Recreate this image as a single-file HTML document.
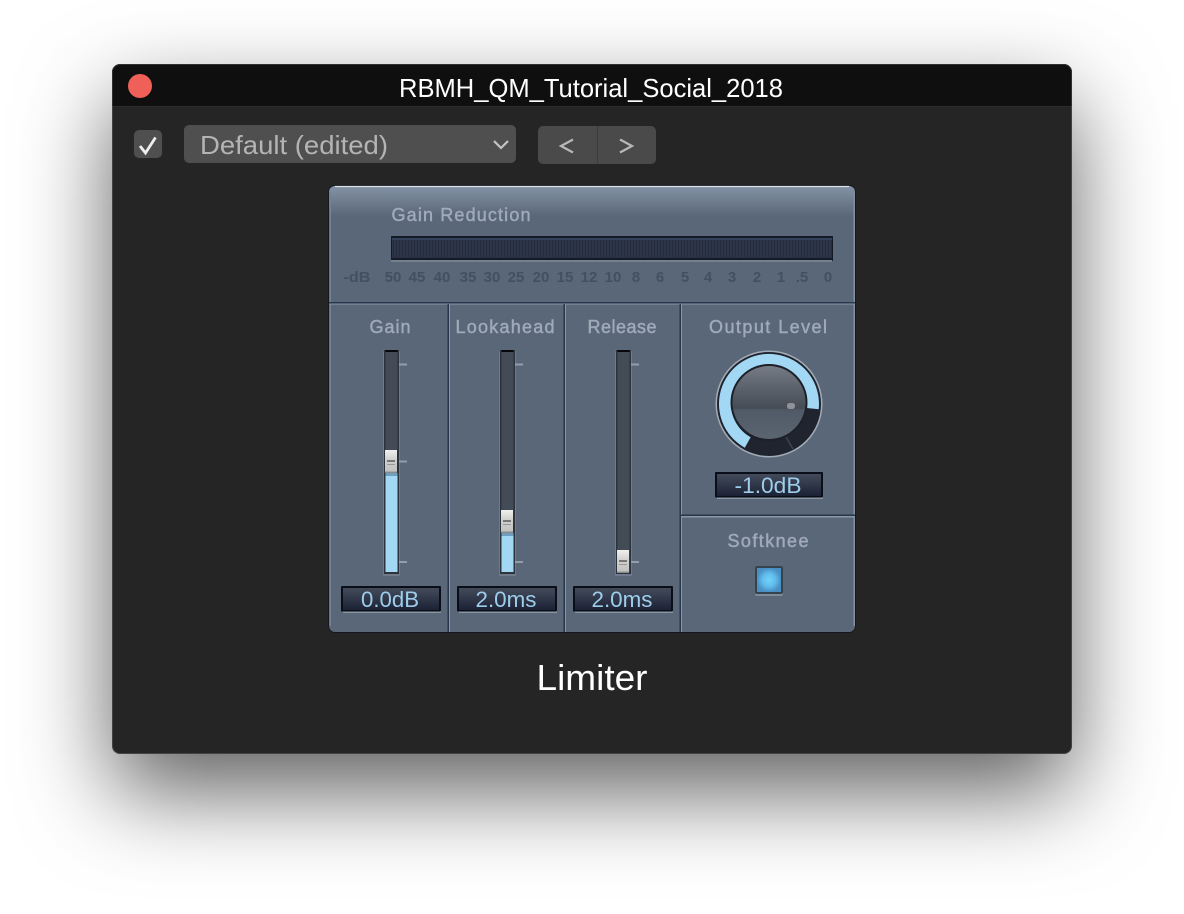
<!DOCTYPE html>
<html><head><meta charset="utf-8"><style>
html,body{margin:0;padding:0;background:#fff;width:1184px;height:914px;overflow:hidden}
#win{position:absolute;left:112px;top:64px;width:960px;height:690px;border-radius:8px;background:#252525;box-shadow:0 38px 90px 0 rgba(0,0,0,.62)}
svg{position:absolute;left:0;top:0}
text{font-family:"Liberation Sans",sans-serif}
.l{font-size:18px;fill:#a0aab8;text-anchor:middle;stroke:#a0aab8;stroke-width:.45}
.n{font-size:15px;font-weight:bold;fill:#434f63;text-anchor:middle}
.v{font-size:22px;fill:#9dcdea;text-anchor:middle}
</style></head><body>
<div id="win"></div>
<svg width="1184" height="914" viewBox="0 0 1184 914">
<defs>
<linearGradient id="top" x1="0" y1="0" x2="0" y2="1"><stop offset="0" stop-color="#8492a5"/><stop offset="1" stop-color="#5a6779"/></linearGradient>
<linearGradient id="val" x1="0" y1="0" x2="0" y2="1"><stop offset="0" stop-color="#434b5b"/><stop offset="1" stop-color="#1c2235"/></linearGradient>
<linearGradient id="th" x1="0" y1="0" x2="0" y2="1"><stop offset="0" stop-color="#f0f0ee"/><stop offset=".45" stop-color="#cfcfcd"/><stop offset=".9" stop-color="#c4c4c2"/><stop offset="1" stop-color="#77797b"/></linearGradient>
<linearGradient id="knob" x1="0" y1="0" x2="0" y2="1"><stop offset="0" stop-color="#767c85"/><stop offset=".3" stop-color="#5c626c"/><stop offset=".58" stop-color="#454c56"/><stop offset=".6" stop-color="#505a66"/><stop offset="1" stop-color="#5b6571"/></linearGradient>
<radialGradient id="led"><stop offset="0" stop-color="#72d4f7"/><stop offset=".55" stop-color="#5fbcec"/><stop offset="1" stop-color="#4a8fc2"/></radialGradient>
<pattern id="st" width="3" height="4" patternUnits="userSpaceOnUse"><rect width="3" height="4" fill="#2c3449"/><rect width="1" height="4" fill="#252c3e"/></pattern>
<clipPath id="wc"><rect x="112" y="64" width="960" height="690" rx="8"/></clipPath>
</defs>

<!-- title bar -->
<g clip-path="url(#wc)">
<rect x="112" y="64" width="960" height="43" fill="#0f0f0f"/>
<rect x="112" y="106" width="960" height="1" fill="#2b2b2b"/>
</g>
<rect x="112.500" y="64.500" width="959" height="689" rx="7.500" fill="none" stroke="#fff" stroke-opacity=".14"/>
<circle cx="140" cy="86" r="12" fill="#ef6058"/>
<text x="399" y="97" font-size="26" fill="#fff" textLength="384" lengthAdjust="spacingAndGlyphs">RBMH_QM_Tutorial_Social_2018</text>

<!-- toolbar -->
<rect x="134" y="130" width="28" height="28" rx="5" fill="#4f4f4f"/>
<path d="M140 146L145.500 153L155.500 137.500" fill="none" stroke="#eee" stroke-width="2.800"/>
<rect x="184" y="125" width="332" height="38" rx="5" fill="#4f4f4f"/>
<text x="200" y="154" font-size="26" fill="#b4b4b4" textLength="188" lengthAdjust="spacingAndGlyphs">Default (edited)</text>
<path d="M494 141l7 7 7-7" fill="none" stroke="#c4c4c4" stroke-width="2.200"/>
<rect x="538" y="126" width="118" height="38" rx="5" fill="#4a4a4a"/>
<rect x="597" y="126" width="1" height="38" fill="#3c3c3c"/>
<path d="M573 139.500L561 146L573 152.500M620 139.500L632 146L620 152.500" fill="none" stroke="#b8b8b8" stroke-width="2.200"/>

<!-- panel -->
<g style="filter:blur(.35px)">
<rect x="328" y="185" width="528" height="448" rx="7" fill="#15181e"/>
<rect x="329" y="186" width="526" height="446" rx="6" fill="#5a6779"/>
<path d="M329 192a6 6 0 0 1 6-6h514a6 6 0 0 1 6 6v24h-526z" fill="url(#top)"/>
<path d="M335 186.500h514" stroke="#dfe4ea" stroke-width="1.200"/>
<rect x="329.500" y="192" width="1.500" height="434" fill="#75828f"/>
<rect x="853.500" y="192" width="1.500" height="434" fill="#8490a0"/>

<text class="l" x="461" y="221" textLength="139" lengthAdjust="spacing">Gain Reduction</text>

<!-- meter -->
<rect x="391" y="236" width="442" height="25" fill="#141a26"/>
<rect x="392" y="240" width="440" height="18" fill="url(#st)"/>
<rect x="392" y="238" width="440" height="2" fill="#33425a"/>
<rect x="391" y="260" width="441" height="2" fill="#73808f"/>

<g class="scale">
<text class="n" x="357" y="282" textLength="27" lengthAdjust="spacingAndGlyphs">-dB</text>
<text class="n" x="393" y="282">50</text><text class="n" x="417" y="282">45</text><text class="n" x="442" y="282">40</text><text class="n" x="468" y="282">35</text><text class="n" x="492" y="282">30</text><text class="n" x="516" y="282">25</text><text class="n" x="541" y="282">20</text><text class="n" x="565" y="282">15</text><text class="n" x="589" y="282">12</text><text class="n" x="613" y="282">10</text><text class="n" x="636" y="282">8</text><text class="n" x="660" y="282">6</text><text class="n" x="685" y="282">5</text><text class="n" x="708" y="282">4</text><text class="n" x="732" y="282">3</text><text class="n" x="757" y="282">2</text><text class="n" x="781" y="282">1</text><text class="n" x="802" y="282">.5</text><text class="n" x="828" y="282">0</text>
</g>

<!-- dividers -->
<rect x="329" y="302" width="526" height="1.500" fill="#27364c"/>
<rect x="329" y="303.500" width="526" height="1" fill="#8a97a8"/>
<g fill="#27364c"><rect x="447.500" y="304" width="1.500" height="328"/><rect x="563.500" y="304" width="1.500" height="328"/><rect x="679.500" y="304" width="1.500" height="328"/></g>
<g fill="#8a97a8"><rect x="449" y="304" width="1" height="328"/><rect x="565" y="304" width="1" height="328"/><rect x="681" y="304" width="1" height="328"/></g>
<rect x="681" y="514.500" width="174" height="1.500" fill="#27364c"/>
<rect x="681" y="516" width="174" height="1.500" fill="#8a97a8"/>

<text class="l" x="390" y="333" textLength="41" lengthAdjust="spacing">Gain</text>
<text class="l" x="505" y="333" textLength="99" lengthAdjust="spacing">Lookahead</text>
<text class="l" x="622" y="333" textLength="69" lengthAdjust="spacing">Release</text>
<text class="l" x="768" y="333" textLength="118" lengthAdjust="spacing">Output Level</text>
<text class="l" x="768" y="547" textLength="81" lengthAdjust="spacing">Softknee</text>

<!-- slider 1 -->
<g>
<rect x="383" y="351" width="17" height="225" fill="#6f7b8a" rx="1"/>
<rect x="384" y="350" width="15" height="224" fill="#2c333d"/>
<rect x="385.500" y="350" width="12" height="2" fill="#06070a"/>
<rect x="385.500" y="352" width="12" height="98" fill="#424b56"/>
<rect x="385.500" y="474" width="12" height="98" fill="#a2d8f4"/>
<rect x="385.500" y="473" width="12" height="3" fill="#6f9fbf"/>
<rect x="385" y="450" width="12" height="23" fill="url(#th)"/>
<rect x="387" y="460" width="8" height="2" fill="#777"/><rect x="387" y="464" width="8" height="1" fill="#999"/>
<path d="M399 364.500h8M399 461.500h8M399 562h8" stroke="#929da9" stroke-width="2"/>
</g>
<!-- slider 2 -->
<g>
<rect x="499" y="351" width="17" height="225" fill="#6f7b8a" rx="1"/>
<rect x="500" y="350" width="15" height="224" fill="#2c333d"/>
<rect x="501.500" y="350" width="12" height="2" fill="#06070a"/>
<rect x="501.500" y="352" width="12" height="158" fill="#424b56"/>
<rect x="501.500" y="534" width="12" height="38" fill="#a2d8f4"/>
<rect x="501.500" y="533" width="12" height="3" fill="#6f9fbf"/>
<rect x="501" y="510" width="12" height="23" fill="url(#th)"/>
<rect x="503" y="520" width="8" height="2" fill="#777"/><rect x="503" y="524" width="8" height="1" fill="#999"/>
<path d="M515 364.500h8M515 562h8" stroke="#929da9" stroke-width="2"/>
</g>
<!-- slider 3 -->
<g>
<rect x="615" y="351" width="17" height="225" fill="#6f7b8a" rx="1"/>
<rect x="616" y="350" width="15" height="224" fill="#2c333d"/>
<rect x="617.500" y="350" width="12" height="2" fill="#06070a"/>
<rect x="617.500" y="352" width="12" height="220" fill="#424b56"/>
<rect x="617" y="550" width="12" height="23" fill="url(#th)"/>
<rect x="619" y="560" width="8" height="2" fill="#777"/><rect x="619" y="564" width="8" height="1" fill="#999"/>
<path d="M631 364.500h8M631 562h8" stroke="#929da9" stroke-width="2"/>
</g>

<!-- value boxes -->
<g>
<rect x="343" y="588" width="98" height="25" fill="#8a95a3"/><rect x="341" y="586" width="100" height="25.500" rx="1" fill="#0a0e18"/><rect x="343" y="588" width="96" height="22" fill="url(#val)"/>
<text class="v" x="390" y="607" textLength="58" lengthAdjust="spacingAndGlyphs">0.0dB</text>
<rect x="459" y="588" width="98" height="25" fill="#8a95a3"/><rect x="457" y="586" width="100" height="25.500" rx="1" fill="#0a0e18"/><rect x="459" y="588" width="96" height="22" fill="url(#val)"/>
<text class="v" x="506" y="607" textLength="61" lengthAdjust="spacingAndGlyphs">2.0ms</text>
<rect x="575" y="588" width="98" height="25" fill="#8a95a3"/><rect x="573" y="586" width="100" height="25.500" rx="1" fill="#0a0e18"/><rect x="575" y="588" width="96" height="22" fill="url(#val)"/>
<text class="v" x="622" y="607" textLength="61" lengthAdjust="spacingAndGlyphs">2.0ms</text>
<rect x="717" y="474" width="106" height="25" fill="#8a95a3"/><rect x="715" y="472" width="108" height="25.500" rx="1" fill="#0a0e18"/><rect x="717" y="474" width="104" height="22" fill="url(#val)"/>
<text class="v" x="768" y="493" textLength="67" lengthAdjust="spacingAndGlyphs">-1.0dB</text>
</g>

<!-- knob -->
<circle cx="769" cy="404" r="53.500" fill="#a4adb7"/>
<circle cx="769" cy="404" r="52" fill="#20242f"/>
<path d="M744.800 447.700A50 50 0 1 1 818.700 409.200L806.800 408A38 38 0 1 0 750.600 437.200Z" fill="#a2d8f4"/>
<path d="M786 437l7 12" stroke="#3c4452" stroke-width="1.500"/>
<circle cx="769" cy="402.500" r="38.500" fill="#1d2028"/>
<circle cx="769" cy="402.500" r="36.500" fill="url(#knob)"/>
<rect x="787" y="403" width="8" height="6" rx="2.500" fill="#8e9298"/>

<!-- LED -->
<rect x="755" y="566" width="28" height="30" rx="2" fill="#7f8b9a"/>
<rect x="755" y="566" width="28" height="28" rx="2" fill="#37424f"/>
<rect x="757" y="568" width="24" height="24" fill="url(#led)"/>
</g>

<text x="592" y="690" font-size="36" fill="#fff" text-anchor="middle" textLength="111" lengthAdjust="spacingAndGlyphs">Limiter</text>
</svg>
</body></html>
